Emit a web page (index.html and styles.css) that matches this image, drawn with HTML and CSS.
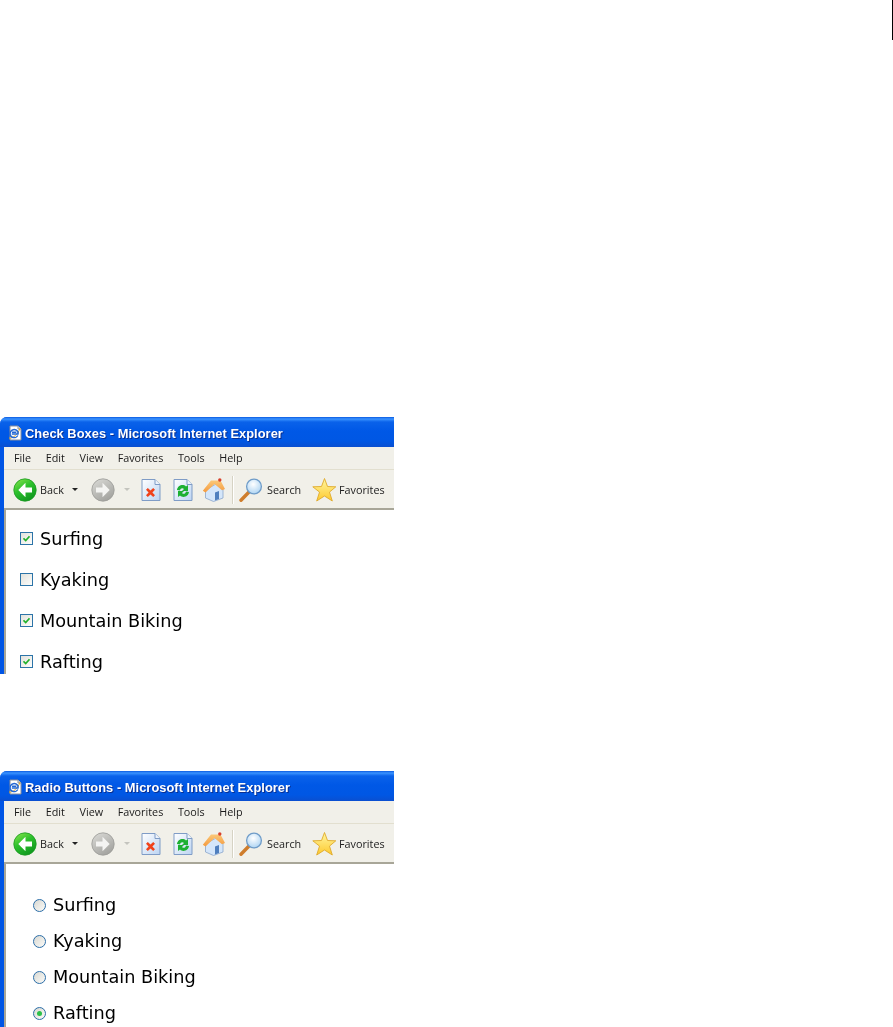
FILE: index.html
```html
<!DOCTYPE html>
<html lang="en">
<head>
<meta charset="utf-8">
<title>Check Boxes and Radio Buttons</title>
<link rel="stylesheet" href="styles.css">
</head>
<body>
<svg class="defs" width="0" height="0" aria-hidden="true">
  <defs>
    <linearGradient id="gGreen" x1="0" y1="0" x2="0.6" y2="1"><stop offset="0" stop-color="#8fe84e"/><stop offset="0.5" stop-color="#2cc02c"/><stop offset="1" stop-color="#11991f"/></linearGradient>
    <linearGradient id="gGray" x1="0" y1="0" x2="0.6" y2="1"><stop offset="0" stop-color="#dcdcd8"/><stop offset="1" stop-color="#a4a4a0"/></linearGradient>
    <linearGradient id="gPage" x1="0" y1="0" x2="1" y2="1"><stop offset="0" stop-color="#ffffff"/><stop offset="1" stop-color="#bcd4f2"/></linearGradient>
    <linearGradient id="gStar" x1="0" y1="0" x2="0" y2="1"><stop offset="0" stop-color="#fff6a0"/><stop offset="1" stop-color="#fdc92e"/></linearGradient>
    <linearGradient id="gRoof" x1="0" y1="0" x2="0" y2="1"><stop offset="0" stop-color="#fbc878"/><stop offset="1" stop-color="#f49a3e"/></linearGradient>
    <radialGradient id="gLens" cx="0.45" cy="0.35" r="0.8"><stop offset="0" stop-color="#ffffff"/><stop offset="1" stop-color="#9ccbf0"/></radialGradient>
    <symbol id="ie" viewBox="0 0 16 16">
      <path d="M3 1h8l3 3v11H3z" fill="#fff" stroke="#8a8f9c"/>
      <path d="M11 1v3h3" fill="#dfe6f2" stroke="#8a8f9c"/>
      <path d="M2 13c3.500 1 9.500-4 11-10" fill="none" stroke="#e0a92c" stroke-width="1"/>
      <path d="M10.800 10.500C9.500 12.800 6.800 13 5 12 3 10.800 2.600 8.500 3.600 6.600 4.800 4.500 7.500 4 9.400 5.200 11 6.200 11.300 7.800 11 9H4.800M5 7.300h4.300" fill="none" stroke="#2468d4" stroke-width="1.500"/>
    </symbol>
    <symbol id="back" viewBox="0 0 24 24">
      <circle cx="12" cy="12" r="11.200" fill="url(#gGreen)" stroke="#1c9a22" stroke-width="0.8"/>
      <path d="M12.500 4.800 5.300 12l7.200 7.200v-4.600H19V9.400h-6.500z" fill="#fff"/>
    </symbol>
    <symbol id="forward" viewBox="0 0 24 24">
      <circle cx="12" cy="12" r="11.200" fill="url(#gGray)" stroke="#9c9c98" stroke-width="0.8"/>
      <path d="M11.500 4.800 18.700 12l-7.200 7.200v-4.600H5V9.400h6.500z" fill="#f4f4f2"/>
    </symbol>
    <symbol id="stop" viewBox="0 0 20 22">
      <path d="M1 .5h13l5 5v16H1z" fill="url(#gPage)" stroke="#7f9cc6"/>
      <path d="M14 .5v5h5" fill="#eef3fb" stroke="#7f9cc6"/>
      <path d="m6.800 9 2.700 2.500L12.200 9l1.800 1.800-2.600 2.700 2.600 2.700-1.800 1.800-2.700-2.500L6.800 18 5 16.200l2.600-2.700L5 10.800z" fill="#f0431c"/>
    </symbol>
    <symbol id="refresh" viewBox="0 0 20 22">
      <path d="M1 .5h13l5 5v16H1z" fill="url(#gPage)" stroke="#7f9cc6"/>
      <path d="M14 .5v5h5" fill="#eef3fb" stroke="#7f9cc6"/>
      <path d="M4 11c.5-4.500 6-6.500 9-3.500L15 6v6H9l2-2c-1.500-1.500-3.500-1-4 1.500z" fill="#1cb032"/>
      <path d="M16 13c-.5 4.500-6 6.500-9 3.500L5 18v-6h6l-2 2c1.500 1.500 3.500 1 4-1.500z" fill="#1cb032"/>
    </symbol>
    <symbol id="home" viewBox="0 0 24 24">
      <path d="M3.500 12v8l8 3.500L21 20v-9l-7-5z" fill="#d4e6fa" stroke="#8aa6cc" stroke-width="0.8"/>
      <path d="M13 14.500v8l4-1.500v-8z" fill="#4f7fbe"/>
      <path d="M.8 12.800 9 2.500h9.500L23 11l-3 1.200L12.500 6l-9 8.500z" fill="url(#gRoof)"/>
      <circle cx="17.800" cy="2" r="1.700" fill="#d8402a"/>
    </symbol>
    <symbol id="search" viewBox="0 0 24 24">
      <path d="M2 22.300 10 14" stroke="#cf7d2c" stroke-width="3.400" stroke-linecap="round"/>
      <circle cx="15" cy="8.500" r="7.400" fill="url(#gLens)" stroke="#6f9cc8" stroke-width="1.300"/>
    </symbol>
    <symbol id="star" viewBox="0 0 24 24">
      <path d="m12.500 .5 3 8 8.300.3-6.300 5.300 2.800 8.900-7.800-5-7.800 5L7.500 14.100 .8 8.800l8.700-.3z" fill="url(#gStar)" stroke="#dfa92a" stroke-width="0.9"/>
    </symbol>
    <symbol id="tick" viewBox="0 0 7 7">
      <path d="M.5 3.300 2.700 5.500 6.500 1.300" fill="none" stroke="#1fb02a" stroke-width="1.600"/>
    </symbol>
  </defs>
</svg>

<div class="edge-mark"></div>

<section class="window window-checks">
  <header class="titlebar"><svg class="ic-title"><use href="#ie"/></svg><span>Check Boxes - Microsoft Internet Explorer</span></header>
  <div class="inner">
    <nav class="menubar"><span>File</span><span>Edit</span><span>View</span><span>Favorites</span><span>Tools</span><span>Help</span></nav>
    <div class="toolbar">
      <svg class="ic-nav"><use href="#back"/></svg><span class="lbl lbl-back">Back</span><i class="caret"></i>
      <svg class="ic-nav ic-fwd"><use href="#forward"/></svg><i class="caret caret-off"></i>
      <svg class="ic-page ic-stop"><use href="#stop"/></svg>
      <svg class="ic-page ic-refresh"><use href="#refresh"/></svg>
      <svg class="ic-home"><use href="#home"/></svg>
      <b class="sep"></b>
      <svg class="ic-search"><use href="#search"/></svg><span class="lbl lbl-search">Search</span>
      <svg class="ic-star"><use href="#star"/></svg><span class="lbl lbl-fav">Favorites</span>
    </div>
    <ul class="content checks">
      <li><span class="box"><svg class="tick"><use href="#tick"/></svg></span>Surfing</li>
      <li><span class="box"></span>Kyaking</li>
      <li><span class="box"><svg class="tick"><use href="#tick"/></svg></span>Mountain Biking</li>
      <li><span class="box"><svg class="tick"><use href="#tick"/></svg></span>Rafting</li>
    </ul>
  </div>
</section>

<section class="window window-radios">
  <header class="titlebar"><svg class="ic-title"><use href="#ie"/></svg><span>Radio Buttons - Microsoft Internet Explorer</span></header>
  <div class="inner">
    <nav class="menubar"><span>File</span><span>Edit</span><span>View</span><span>Favorites</span><span>Tools</span><span>Help</span></nav>
    <div class="toolbar">
      <svg class="ic-nav"><use href="#back"/></svg><span class="lbl lbl-back">Back</span><i class="caret"></i>
      <svg class="ic-nav ic-fwd"><use href="#forward"/></svg><i class="caret caret-off"></i>
      <svg class="ic-page ic-stop"><use href="#stop"/></svg>
      <svg class="ic-page ic-refresh"><use href="#refresh"/></svg>
      <svg class="ic-home"><use href="#home"/></svg>
      <b class="sep"></b>
      <svg class="ic-search"><use href="#search"/></svg><span class="lbl lbl-search">Search</span>
      <svg class="ic-star"><use href="#star"/></svg><span class="lbl lbl-fav">Favorites</span>
    </div>
    <ul class="content radios">
      <li><span class="radio"></span>Surfing</li>
      <li><span class="radio"></span>Kyaking</li>
      <li><span class="radio"></span>Mountain Biking</li>
      <li><span class="radio on"></span>Rafting</li>
    </ul>
  </div>
</section>
</body>
</html>
```
FILE: styles.css
```css
html, body { margin: 0; padding: 0; background: #fff; }
body { height: 1027px; overflow: hidden; font-family: "DejaVu Sans", sans-serif; }
.defs { display: block; height: 0; }
.edge-mark { width: 1px; height: 40px; background: #000; margin-left: 892px; }

.window { width: 394px; height: 257px; overflow: hidden; border-radius: 7px 0 0 0; background: #0055e5; filter: blur(0.3px); }
.window-checks { margin-top: 377px; }
.window-radios { margin-top: 97px; height: 256px; }

.titlebar { height: 30px; box-sizing: border-box; padding: 2px 0 0 7px; display: flex; align-items: center;
  background: linear-gradient(#0a5ae0 0, #3a93ff 2px, #0a62ea 5px, #0058e6 14px, #0057e4 24px, #0a4fd0 30px);
  color: #fff; font: bold 12.850px "Liberation Sans", sans-serif; letter-spacing: 0.04px; text-shadow: 1px 1px 0 #0a2f90; white-space: nowrap; }
.ic-title { width: 16px; height: 16px; margin-right: 2px; flex: none; }

.inner { margin-left: 4px; background: #f1f0e9; height: 100%; }
.menubar { height: 22px; box-sizing: content-box; display: flex; align-items: center; padding-left: 10px; gap: 14.600px;
  border-bottom: 1px solid #e2dfcf; font: 10.800px "Open Sans", sans-serif; color: #1a1a1a; }
.menubar span { margin-top: -2px; }
.toolbar { height: 40px; padding-top: 1px; display: flex; align-items: center; background: #f1f0e9;
  border-bottom: 2px solid #a8a698; font: 10.800px "Open Sans", sans-serif; color: #222; box-sizing: border-box; }
.lbl { flex: none; margin-bottom: 1px; }

.ic-nav { width: 24px; height: 24px; margin-left: 9px; flex: none; }
.lbl-back { margin-left: 3px; width: 27px; }
.caret { width: 0; height: 0; border: 3px solid transparent; border-top: 3px solid #222; border-bottom: 0; margin-left: 5px; flex: none; }
.ic-nav.ic-fwd { margin-left: 13px; }
.caret-off { border-top-color: #c4c4be; margin-left: 9px; }
.ic-page { width: 20px; height: 22px; flex: none; }
.ic-stop { margin-left: 11px; }
.ic-refresh { margin-left: 12px; }
.ic-home { width: 24px; height: 24px; margin-left: 9px; flex: none; }
.sep { width: 1px; height: 28px; background: #d6d3c4; margin-left: 6px; flex: none; box-shadow: 1px 0 0 #fff; }
.ic-search { width: 24px; height: 24px; margin-left: 6px; flex: none; }
.lbl-search { margin-left: 4px; width: 34px; }
.ic-star { width: 24px; height: 24px; margin-left: 11px; flex: none; }
.lbl-fav { margin-left: 3px; }

.content { list-style: none; margin: 0; padding: 0; height: 100%; background: #fff; border-left: 2px solid #a8a698;
  font-size: 17.700px; color: #000; }
.content li { display: flex; align-items: center; }
.checks { padding: 8px 0 0 14px; }
.checks li { height: 41px; }
.radios { padding: 23px 0 0 27px; }
.radios li { height: 36px; }

.box { width: 11px; height: 11px; border: 1px solid #2c74a8; background: linear-gradient(135deg, #e2e2dc, #fdfdfb); margin-right: 7px; flex: none;
  display: flex; align-items: center; justify-content: center; }
.tick { width: 7px; height: 7px; }
.radio { width: 11px; height: 11px; border: 1px solid #2c6ea8; border-radius: 50%; background: linear-gradient(135deg, #d8d8d2, #fbfbf8); margin-right: 7px; flex: none; }
.radio.on::after { content: ""; width: 5px; height: 5px; border-radius: 50%; background: #2cc04a; margin: 3px; display: block; }
```
